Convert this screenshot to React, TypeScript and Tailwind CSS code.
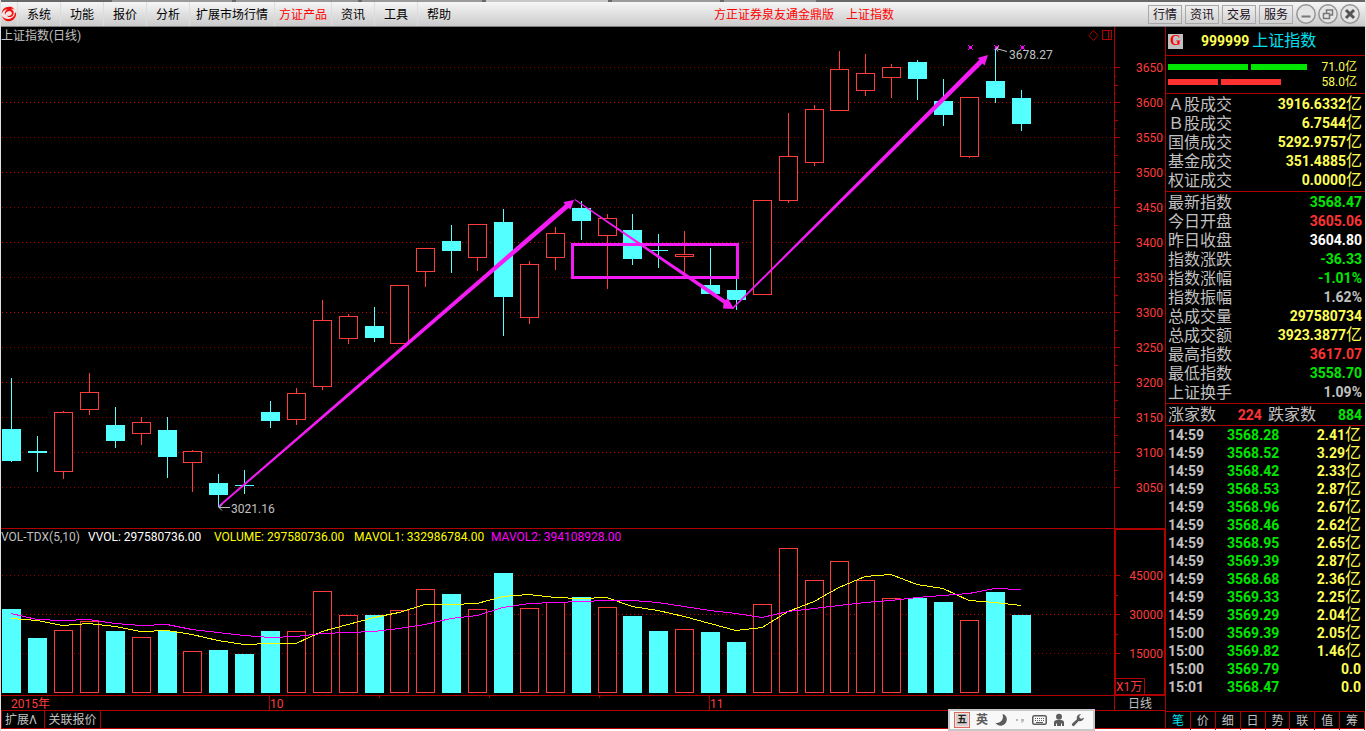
import React from "react";

type Candle = [x: number, high: number, top: number, bottom: number, low: number, down: 0 | 1, volumeTop: number];

const CANDLES: Candle[] = [
  [11, 378, 429, 461, 462, 1, 609],
  [37, 436, 451, 453, 472, 1, 638],
  [63, 411, 412, 472, 479, 0, 630],
  [89, 373, 392, 410, 415, 0, 621],
  [115, 407, 425, 441, 448, 1, 631],
  [141, 417, 422, 434, 445, 0, 637],
  [167, 417, 430, 457, 478, 1, 631],
  [192, 450, 451, 463, 492, 0, 651],
  [218, 474, 483, 495, 507, 1, 650],
  [244, 470, 485, 486, 494, 1, 654],
  [270, 401, 412, 421, 428, 1, 631],
  [296, 388, 393, 420, 425, 0, 631],
  [322, 300, 320, 387, 390, 0, 591],
  [348, 314, 316, 339, 344, 0, 615],
  [374, 307, 326, 338, 342, 1, 615],
  [399, 285, 285, 344, 344, 0, 610],
  [425, 248, 248, 272, 287, 0, 589],
  [451, 225, 241, 251, 273, 1, 594],
  [477, 224, 224, 258, 271, 0, 609],
  [503, 209, 222, 297, 336, 1, 573],
  [529, 261, 264, 318, 324, 0, 608],
  [555, 227, 233, 258, 270, 0, 602],
  [581, 201, 208, 221, 240, 1, 597],
  [607, 214, 218, 236, 289, 0, 607],
  [632, 214, 230, 259, 265, 1, 616],
  [658, 234, 250, 251, 268, 1, 631],
  [684, 231, 254, 257, 275, 0, 629],
  [710, 248, 285, 294, 294, 1, 632],
  [736, 279, 290, 300, 310, 1, 642],
  [762, 200, 200, 295, 295, 0, 604],
  [788, 113, 156, 201, 203, 0, 548],
  [814, 105, 109, 163, 166, 0, 580],
  [839, 51, 69, 111, 111, 0, 561],
  [865, 54, 73, 91, 96, 0, 580],
  [891, 64, 67, 78, 98, 0, 598],
  [917, 60, 62, 79, 100, 1, 598],
  [943, 79, 101, 115, 126, 1, 602],
  [969, 97, 97, 157, 158, 0, 620],
  [995, 49, 81, 98, 103, 1, 592],
  [1021, 90, 98, 124, 131, 1, 615],
];

const MA5 = [
  618, 620, 625, 623, 626, 631, 630, 634, 640, 644, 643, 643, 631, 624, 617, 612, 604, 604, 603, 596,
  594, 597, 598, 597, 606, 610, 616, 623, 630, 627, 611, 601, 587, 576, 574, 584, 588, 600, 602, 605,
];
const MA10 = [
  613, 619, 620, 619, 623, 625, 624, 629, 632, 635, 637, 636, 633, 632, 631, 628, 624, 618, 615, 607,
  603, 602, 601, 600, 600, 602, 606, 610, 613, 617, 611, 608, 605, 602, 600, 597, 595, 593, 588, 589,
];

const trace = (ys: number[]) => ys.map((y, i) => `${CANDLES[i][0]},${y + 0.5}`).join(" ");

const PRICES = [3650, 3600, 3550, 3500, 3450, 3400, 3350, 3300, 3250, 3200, 3150, 3100, 3050];
const priceY = (p: number) => 67 + ((3650 - p) / 50) * 35;
const VOLUMES = [45000, 30000, 15000];
const volumeY = (v: number) => 575 + ((45000 - v) / 15000) * 39;

const CYAN = "#54ffff";
const RED = "#ff3c3c";
const LINE = "#b00000";
const MAGENTA = "#f51bf5";

function PriceChart() {
  return (
    <svg className="block h-[501px] w-full" role="img" aria-label="上证指数日K线图">
      <g transform="translate(-1 -27)" shapeRendering="crispEdges">
        {PRICES.map((p, i) => (
          <line key={p} x1="2" x2="100%" y1={priceY(p) + 0.5} y2={priceY(p) + 0.5} stroke={i % 2 ? "#c80000" : "#900000"} strokeDasharray="1 3" />
        ))}
        {CANDLES.map(([x, high, top, bottom, low, down]) =>
          down ? (
            <g key={x} fill={CYAN}>
              <rect x={x} y={high} width="1" height={Math.max(low - high, 1)} />
              <rect x={x - 9} y={top} width="19" height={bottom - top} />
            </g>
          ) : (
            <g key={x}>
              <rect x={x} y={high} width="1" height={low - high} fill={RED} />
              <rect x={x - 8.5} y={top + 0.5} width="18" height={bottom - top - 1} fill="#000" stroke={RED} />
            </g>
          ),
        )}
      </g>
      <g transform="translate(-1 -27)" fill={MAGENTA}>
        <path d="M218.500 505.500L565 204.500L563.500 202L574 200L570.500 209.500L568.500 208L219.500 507Z" />
        <path d="M575 199L725.500 300L728 298.500L734 309L723 308.500L723.500 303.500L574.500 200Z" />
        <path d="M732.500 307.500L979.500 59.500L977.500 58L988 55L984.500 65.500L982.500 63.500L733.500 308.500Z" />
        <rect x="572.500" y="244.500" width="165" height="33" fill="none" stroke={MAGENTA} strokeWidth="3" />
      </g>
      <g transform="translate(-1 -27)" fill="none" stroke="#ff00ff">
        {[970, 996, 1022].map((x) => (
          <g key={x}>
            <path d={`M${x - 2} 45l5 5M${x + 3} 45l-5 5`} />
            <rect x={x - 1} y="46" width="3" height="3" fill="#ff00ff" stroke="none" />
          </g>
        ))}
      </g>
      <g transform="translate(-1 -27)" fill="none" stroke="#c0c0c0">
        <path d="M219 507.500h11M219 507.500l3-3M219 507.500l3 3" />
        <path d="M996 48.500l11 3M996 48.500l2 3M996 48.500l3-2" />
      </g>
      <g transform="translate(-1 -27)" fill="none" stroke={LINE}>
        <path d="M1093.500 30.500l4.500 5l-4.500 5l-4.500 -5Z" />
        <path d="M1102.500 30.500h9v9h-9zM1108.500 30.500v9" shapeRendering="crispEdges" />
      </g>
      <g transform="translate(-1 -27)" fill="#c0c0c0" className="text-[12px]">
        <text x="231" y="513">3021.16</text>
        <text x="1009" y="59">3678.27</text>
      </g>
    </svg>
  );
}

function VolumeChart() {
  return (
    <svg className="block h-[166px] w-full" role="img" aria-label="成交量柱状图">
      <g transform="translate(-1 -529)" shapeRendering="crispEdges">
        {VOLUMES.map((v, i) => (
          <line key={v} x1="2" x2="100%" y1={volumeY(v) + 0.5} y2={volumeY(v) + 0.5} stroke={i % 2 ? "#c80000" : "#900000"} strokeDasharray="1 3" />
        ))}
        {CANDLES.map(([x, , , , , down, top]) =>
          down ? (
            <rect key={x} x={x - 9} y={top} width="19" height={693 - top} fill={CYAN} />
          ) : (
            <rect key={x} x={x - 8.5} y={top + 0.5} width="18" height={692 - top} fill="#000" stroke={RED} />
          ),
        )}
        <polyline points={trace(MA5)} fill="none" stroke="#ffff00" />
        <polyline points={trace(MA10)} fill="none" stroke="#ff00ff" />
      </g>
    </svg>
  );
}

function PriceAxis() {
  const ticks: React.ReactElement[] = [];
  for (let i = 0; i <= 50; i++) {
    const y = Math.round(67 + i * 8.75);
    if (y > 495) break;
    const w = i % 4 === 0 ? 5 : i % 2 === 0 ? 3 : 1;
    ticks.push(<rect key={i} x="0" y={y} width={w} height="1" />);
  }
  return (
    <svg className="block h-[501px] w-full" role="img" aria-label="价格坐标">
      <g transform="translate(0 -27)" fill={LINE} shapeRendering="crispEdges">{ticks}</g>
      <g transform="translate(0 -27)" fill={RED} textAnchor="end" className="text-[12px]">
        {PRICES.map((p) => (
          <text key={p} x="48" y={priceY(p) + 5}>{p}</text>
        ))}
      </g>
    </svg>
  );
}

function VolumeAxis() {
  return (
    <div className="relative border border-[#b00000]">
      <svg className="block h-[164px] w-full" role="img" aria-label="成交量坐标">
        <g transform="translate(0 -530)" fill={LINE} shapeRendering="crispEdges">
          {VOLUMES.map((v) => (
            <rect key={v} x="0" y={volumeY(v)} width="4" height="1" />
          ))}
          {[595, 634].map((y) => (
            <rect key={y} x="0" y={y} width="2" height="1" />
          ))}
        </g>
        <g transform="translate(0 -530)" fill={RED} textAnchor="end" className="text-[12px]">
          {VOLUMES.map((v) => (
            <text key={v} x="47" y={volumeY(v) + 5}>{v}</text>
          ))}
        </g>
      </svg>
      <span className="absolute bottom-0 left-0 flex h-4 w-[29px] items-center border-t border-r border-[#b00000] text-xs text-[#ff3c3c]">X1万</span>
    </div>
  );
}

const MENU: [string, string][] = [
  ["系统", "w-[43px]"],
  ["功能", "w-[43px]"],
  ["报价", "w-[43px]"],
  ["分析", "w-[43px]"],
  ["扩展市场行情", "w-[85px]"],
  ["方证产品", "w-[57px] text-[#ff0000]"],
  ["资讯", "w-[43px]"],
  ["工具", "w-[43px]"],
  ["帮助", "w-[43px]"],
];

function Header() {
  return (
    <header>
      <div className="flex h-[2px] gap-1 bg-[#686868] pl-[111px]">
        <span className="w-[120px] bg-[#9a9a9a]" />
        <span className="w-[122px] bg-[#9a9a9a]" />
        <span className="w-[120px] bg-[#9a9a9a]" />
        <span className="w-[122px] bg-[#c8c8c8]" />
        <span className="w-[108px] bg-[#9a9a9a]" />
        <span className="w-[92px] bg-[#9a9a9a]" />
      </div>
      <div className="flex h-[25px] items-center border-b border-[#808080] bg-linear-to-b from-[#f6f6f6] to-[#cbcbcb] text-xs text-black">
        <svg viewBox="0 0 18 18" className="h-[18px] w-4 shrink-0" aria-hidden="true">
          <circle cx="9" cy="9" r="8" fill="#f4e4e4" />
          <path d="M10.500 .8C4.500 .2 .8 4 1 8.300C2 5.600 4.400 3.800 7.200 3.700C4.400 5.200 3.600 8 5 10.200C5 7.700 6.600 5.600 9.400 5.500C12.300 5.600 12.900 8.300 11.600 9.900C10.500 11.200 8.400 11.500 6.900 10.600C7.800 13 11.500 13 13.300 10.700C15.500 7.700 13.800 4 10.800 3.200C12.300 2.700 14 3 15.200 4.200C14.300 2.400 12.500 1.100 10.500 .8Z" fill="#f01010" />
          <path d="M17 8C17.400 12.800 14 17 9 17.200C5 17.200 2.200 14.700 1.200 11.200C3.500 14.500 8.600 15.800 12.200 13.300C14.300 11.900 15.500 10 15.700 7.200C16.300 7.300 16.800 7.500 17 8Z" fill="#f01010" />
        </svg>
        <nav className="flex shrink-0">
          {MENU.map(([label, look]) => (
            <button key={label} type="button" className={`h-6 border-l border-[#dcdcdc] pt-[2px] text-center ${look}`}>{label}</button>
          ))}
        </nav>
        <h1 className="flex flex-1 justify-center gap-3 pt-px whitespace-nowrap text-[#ff0000]">
          <span>方正证券泉友通金鼎版</span>
          <span>上证指数</span>
        </h1>
        <div className="flex shrink-0 items-center gap-[3px] pr-[5px]">
          {["行情", "资讯", "交易", "服务"].map((t) => (
            <button key={t} type="button" className="h-[19px] w-[34px] border border-[#a8a8a8] bg-linear-to-b from-[#eeeeee] to-[#d2d2d2] leading-[18px] text-[#201020]">{t}</button>
          ))}
          <div className="flex gap-[2px]">
            {[
              ["最小化", "M5.500 12.500h9"],
              ["还原", "M5.500 9.500h6v5h-6zM8.500 9v-3h6v5h-3"],
              ["关闭", "M6 6l8 8M14 6l-8 8"],
            ].map(([name, d], i) => (
              <button key={name} type="button" aria-label={name} className="h-5 w-5">
                <svg viewBox="0 0 20 20" className="h-5 w-5" fill="none" stroke="#808080">
                  <circle cx="10" cy="10" r="9.200" fill="#e4e4e4" stroke="#959595" strokeWidth="1.500" />
                  <path d={d} stroke={i === 2 ? "#555555" : "#777777"} strokeWidth={i === 1 ? 1.5 : i === 2 ? 3 : 2} />
                </svg>
              </button>
            ))}
          </div>
        </div>
      </div>
    </header>
  );
}

type Row = [string, string, string];

const TURNOVER: Row[] = [
  ["Ａ股成交", "3916.6332亿", "text-[#ffff54]"],
  ["Ｂ股成交", "6.7544亿", "text-[#ffff54]"],
  ["国债成交", "5292.9757亿", "text-[#ffff54]"],
  ["基金成交", "351.4885亿", "text-[#ffff54]"],
  ["权证成交", "0.0000亿", "text-[#ffff54]"],
];

const INDEX: Row[] = [
  ["最新指数", "3568.47", "text-[#00e600]"],
  ["今日开盘", "3605.06", "text-[#ff3232]"],
  ["昨日收盘", "3604.80", "text-white"],
  ["指数涨跌", "-36.33", "text-[#00e600]"],
  ["指数涨幅", "-1.01%", "text-[#00e600]"],
  ["指数振幅", "1.62%", "text-[#c0c0c0]"],
  ["总成交量", "297580734", "text-[#ffff54]"],
  ["总成交额", "3923.3877亿", "text-[#ffff54]"],
  ["最高指数", "3617.07", "text-[#ff3232]"],
  ["最低指数", "3558.70", "text-[#00e600]"],
  ["上证换手", "1.09%", "text-[#c0c0c0]"],
];

const TICKS: [string, string, string][] = [
  ["14:59", "3568.28", "2.41亿"],
  ["14:59", "3568.52", "3.29亿"],
  ["14:59", "3568.42", "2.33亿"],
  ["14:59", "3568.53", "2.87亿"],
  ["14:59", "3568.96", "2.67亿"],
  ["14:59", "3568.46", "2.62亿"],
  ["14:59", "3568.95", "2.65亿"],
  ["14:59", "3569.39", "2.87亿"],
  ["14:59", "3568.68", "2.36亿"],
  ["14:59", "3569.33", "2.25亿"],
  ["14:59", "3569.29", "2.04亿"],
  ["15:00", "3569.39", "2.05亿"],
  ["15:00", "3569.82", "1.46亿"],
  ["15:00", "3569.79", "0.0"],
  ["15:01", "3568.47", "0.0"],
];

function Amount({ value }: { value: string }) {
  const yi = value.endsWith("亿");
  return (
    <>
      {yi ? value.slice(0, -1) : value}
      {yi && <span className="text-base leading-none font-normal">亿</span>}
    </>
  );
}

function QuoteTable({ rows }: { rows: Row[] }) {
  return (
    <div className="border-b border-[#b00000] py-px">
      <table className="w-full">
        <tbody>
          {rows.map(([label, value, colour]) => (
            <tr key={label} className="h-[19px]">
              <th scope="row" className="p-0 pl-[2px] text-left text-base leading-[19px] font-normal text-[#c0c0c0]">{label}</th>
              <td className={`p-0 pr-[3px] text-right text-sm leading-[19px] font-bold ${colour}`}><Amount value={value} /></td>
            </tr>
          ))}
        </tbody>
      </table>
    </div>
  );
}

function QuotePanel() {
  return (
    <aside className="flex w-[200px] shrink-0 flex-col border-l border-[#b00000]">
      <div className="flex h-[29px] items-center border-b border-[#b00000] pl-[2px]">
        <span className="flex h-[15px] w-[15px] items-center justify-center bg-[#c0c0c0] font-[Liberation_Serif,serif] text-sm leading-none font-bold text-[#ff0000]">G</span>
        <span className="ml-[18px] text-sm font-bold text-[#ffff54]">999999</span>
        <h2 className="ml-[3px] text-base text-[#00e0f0]">上证指数</h2>
      </div>
      <div className="flex h-[38px] flex-col justify-center border-b border-[#b00000] pr-2 pl-[2px] text-xs text-[#ffff54]">
        <div className="flex h-[15px] items-center">
          <span className="h-[6px] w-20 bg-[#00e600]" />
          <span className="ml-[3px] h-[6px] w-14 bg-[#00e600]" />
          <span className="ml-auto">71.0亿</span>
        </div>
        <div className="flex h-[15px] items-center">
          <span className="h-[6px] w-[50px] bg-[#ff3232]" />
          <span className="ml-[3px] h-[6px] w-[60px] bg-[#ff3232]" />
          <span className="ml-auto">58.0亿</span>
        </div>
      </div>
      <QuoteTable rows={TURNOVER} />
      <QuoteTable rows={INDEX} />
      <div className="flex h-[22px] items-center border-b border-[#b00000] pr-[3px] pl-[2px] text-base text-[#c0c0c0]">
        <span>涨家数</span>
        <span className="ml-auto text-sm font-bold text-[#ff3232]">224</span>
        <span className="ml-[6px]">跌家数</span>
        <span className="ml-[22px] text-sm font-bold text-[#00e600]">884</span>
      </div>
      <table className="w-full text-sm font-bold">
        <tbody>
          {TICKS.map(([time, price, amount], i) => (
            <tr key={i} className="h-[18px] leading-[18px]">
              <td className="w-[61px] p-0 pl-[2px] text-[#c0c0c0]">{time}</td>
              <td className="p-0 text-[#00e600]">{price}</td>
              <td className="p-0 pr-1 text-right text-[#ffff54]"><Amount value={amount} /></td>
            </tr>
          ))}
        </tbody>
      </table>
      <div className="mt-auto grid h-[17px] grid-cols-8 border-t border-[#b00000] text-xs">
        {["笔", "价", "细", "日", "势", "联", "值", "筹"].map((t, i) => (
          <button key={t} type="button" className={i === 0 ? "border-r border-[#b00000] leading-[18px] text-[#00e0f0]" : "border-r border-[#b00000] leading-[18px] text-[#c0c0c0]"}>{t}</button>
        ))}
      </div>
    </aside>
  );
}

function InputToolbar() {
  return (
    <div className="absolute right-[270px] bottom-0 flex h-[22px] w-[147px] items-center gap-[6px] border-2 border-[#c8c8c8] bg-[#f8f8f8] px-1 text-[#5c5c5c]">
      <button type="button" className="flex h-4 w-4 items-center justify-center border border-[#e06a5c] bg-[#d8d0d0] text-[10px] leading-none font-bold text-[#202020] shadow-[inset_0_0_0_1px_#f0e0e0]">五</button>
      <button type="button" className="text-xs leading-none font-bold">英</button>
      <button type="button" aria-label="半角">
        <svg viewBox="0 0 14 14" className="h-[14px] w-[14px]" fill="currentColor"><path d="M8.500 1C13 2 14 7 11.500 10.300C9 13.500 4 13.500 1.300 9.800C5.500 11 10.500 7 8.500 1Z" /></svg>
      </button>
      <button type="button" aria-label="标点">
        <svg viewBox="0 0 12 14" className="h-[14px] w-[12px]" fill="#b8b8b8"><path d="M2 6h2v2H2zM7 6h3v2l-2 2H7l1-2H7z" /></svg>
      </button>
      <button type="button" aria-label="软键盘">
        <svg viewBox="0 0 15 12" className="h-3 w-[15px]" fill="none" stroke="currentColor">
          <rect x=".75" y="1.750" width="13.500" height="8.500" rx="1.500" strokeWidth="1.500" />
          <path d="M3 4.500h9M3 6.500h9" strokeDasharray="1 1" /><path d="M4 8.500h7" />
        </svg>
      </button>
      <button type="button" aria-label="用户">
        <svg viewBox="0 0 12 14" className="h-[14px] w-[12px]" fill="currentColor"><circle cx="6" cy="3.800" r="3" /><path d="M1 13V9.500C1 7.600 2.500 7 6 7s5 .6 5 2.500V13H9v-2.500H8V13H4v-2.500H3V13Z" /></svg>
      </button>
      <button type="button" aria-label="设置">
        <svg viewBox="0 0 14 14" className="h-[14px] w-[14px]" fill="currentColor"><path d="M13 4.500A4 4 0 0 1 7.700 8L3.500 12.600A1.500 1.500 0 0 1 1.300 10.400L5.900 6.200A4 4 0 0 1 10 1L8.200 3.300L8.800 5.200L10.700 5.800Z" /></svg>
      </button>
    </div>
  );
}

export default function App() {
  return (
    <div className="relative flex min-h-screen flex-col border-x border-[#e0e0e0] bg-white font-[Roboto,'Noto_Sans_CJK_SC',sans-serif]">
      <Header />
      <div className="flex border-b border-[#b00000] bg-black">
        <main className="flex min-w-0 flex-1 flex-col">
          <div className="flex border-b border-[#b00000]">
            <section className="relative min-w-0 flex-1">
              <PriceChart />
              <h2 className="absolute top-0 left-0 text-xs leading-[19px] text-[#c0c0c0]">上证指数(日线)</h2>
            </section>
            <div className="w-[51px] shrink-0 border-l border-[#b00000]"><PriceAxis /></div>
          </div>
          <div className="flex border-b border-[#b00000]">
            <section className="relative min-w-0 flex-1">
              <VolumeChart />
              <div className="absolute top-0 left-0 flex text-xs leading-4 whitespace-nowrap">
                <span className="w-[87px] text-[#c0c0c0]">VOL-TDX(5,10)</span>
                <span className="w-[126px] text-white">VVOL: 297580736.00</span>
                <span className="w-[140px] text-[#ffff00]">VOLUME: 297580736.00</span>
                <span className="w-[137px] text-[#ffff00]">MAVOL1: 332986784.00</span>
                <span className="text-[#ff00ff]">MAVOL2: 394108928.00</span>
              </div>
            </section>
            <div className="w-[51px] shrink-0 border-l border-[#b00000]"><VolumeAxis /></div>
          </div>
          <div className="flex h-[15px] border-b border-[#b00000] text-xs">
            <svg className="block h-[14px] min-w-0 flex-1" role="img" aria-label="时间坐标">
              <g transform="translate(-1 0)" fill={LINE} shapeRendering="crispEdges">
                <rect x="269" width="1" height="14" />
                <rect x="709" width="1" height="14" />
                {[379, 489, 599].map((x) => (
                  <rect key={x} x={x} width="1" height="2" />
                ))}
              </g>
              <g transform="translate(-1 0)" fill={RED}>
                <text x="11" y="12">2015年</text>
                <text x="270" y="12">10</text>
                <text x="710" y="12">11</text>
              </g>
            </svg>
            <button type="button" className="w-[51px] border-l border-[#b00000] leading-4 text-[#c0c0c0]">日线</button>
          </div>
          <div className="flex h-[17px] border-l border-[#b00000] text-xs text-[#c0c0c0]">
            <button type="button" className="w-[43px] border-r border-[#b00000] pl-[3px] text-left leading-4">扩展Λ</button>
            <button type="button" className="w-14 border-r border-[#b00000] leading-4">关联报价</button>
          </div>
        </main>
        <QuotePanel />
      </div>
      <InputToolbar />
    </div>
  );
}
